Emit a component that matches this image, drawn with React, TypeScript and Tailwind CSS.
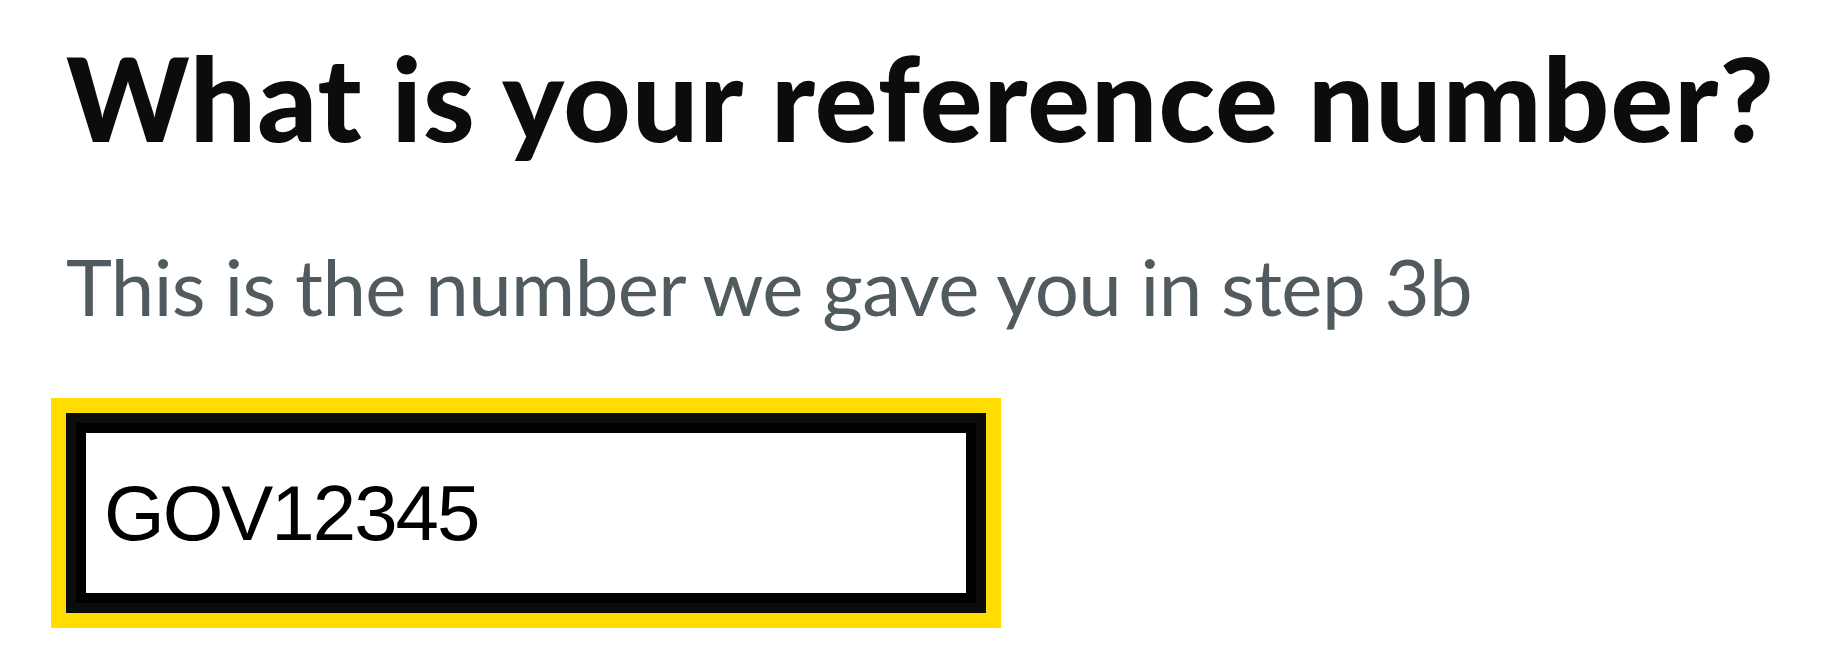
import React from 'react';

const App: React.FC = () => {
  return (
    <div className="min-h-screen bg-white pl-[66px] pt-[39px] flex flex-col">
      {/* Question heading */}
      <h1 className="whitespace-nowrap text-[117px] leading-[1] tracking-[1.1px] font-black text-[#0b0c0c] font-['Lato',sans-serif]">
        What is your reference number?
      </h1>

      {/* Hint */}
      <p className="mt-[91px] whitespace-nowrap text-[78px] leading-[1] tracking-[-0.6px] text-[#505a5f] font-['Lato',sans-serif]">
        This is the number we gave you in step 3b
      </p>

      {/* Focused text input */}
      <input
        type="text"
        defaultValue="GOV12345"
        readOnly
        className="mt-[88px] w-[920px] h-[200px] bg-white border-[10px] border-[#0b0c0c] shadow-[inset_0_0_0_10px_#000] outline-[15px] outline-solid outline-[#ffdd00] pl-[28px] text-[78px] tracking-[-2px] text-black font-['Liberation_Sans',Arial,sans-serif]"
      />
    </div>
  );
};

export default App;
